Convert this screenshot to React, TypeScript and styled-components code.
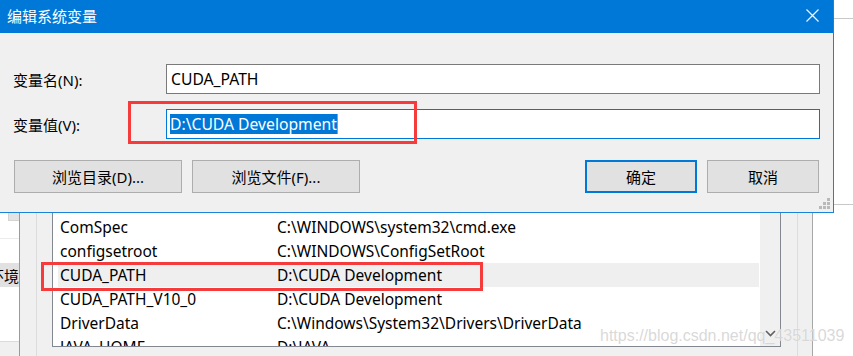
import React from "react";
import styled, { createGlobalStyle } from "styled-components";

const Global = createGlobalStyle`
  html, body { margin: 0; padding: 0; }
  body {
    width: 853px;
    height: 356px;
    overflow: hidden;
    background: #ffffff;
    font-family: "Noto Sans", "Noto Sans CJK SC", sans-serif;
    color: #000;
  }
  * { box-sizing: border-box; }
`;

const Screen = styled.div`
  position: relative;
  width: 853px;
  height: 356px;
  overflow: hidden;
`;

/* ---------- background window ---------- */
const BackWindow = styled.div`
  display: grid;
  grid-template-columns: 20px 32px 729px 32px 40px;
  grid-template-rows: 212px 144px;
  width: 853px;
  height: 356px;
  background: #ffffff;
`;

const TopStrip = styled.div`
  grid-column: 1 / -1;
  display: flex;
  flex-direction: column;
  padding-top: 18px;
  background: #ffffff;
`;

const Rule = styled.div<{ $gap?: number }>`
  height: 1px;
  background: #c8c8c8;
  margin-top: ${(p) => p.$gap ?? 0}px;
`;

const LeftPane = styled.div`
  display: flex;
  flex-direction: column;
  background: #ffffff;
  border-right: 1px solid #9a9a9a;
  overflow: hidden;
`;

const Nub = styled.div`
  align-self: flex-end;
  width: 11px;
  height: 9px;
  background: #e3e3e3;
  border-left: 1px solid #d4d4d4;
  border-bottom: 1px solid #d4d4d4;
`;

const PaneLine = styled.div<{ $top: number }>`
  height: 1px;
  margin-top: ${(p) => p.$top}px;
  background: #ececec;
`;

const PaneButton = styled.div`
  display: flex;
  justify-content: flex-end;
  align-items: center;
  height: 24px;
  margin-top: 24px;
  background: #e1e1e1;
  font-size: 15px;
  white-space: nowrap;
  overflow: hidden;
`;

const PaneFoot = styled.div`
  margin-top: auto;
  height: 15px;
  background: #f0f0f0;
  border-top: 1px solid #dcdcdc;
`;

const Gutter = styled.div`
  display: flex;
  background: #f0f0f0;
  padding-left: 16px;
`;

const GutterBar = styled.div<{ $edge?: boolean }>`
  width: 100%;
  border-left: 1px solid #dcdcdc;
  border-right: ${(p) => (p.$edge ? "1px solid #a6a6a6" : "none")};
`;

const ListCell = styled.div`
  background: #f0f0f0;
`;

const ListBox = styled.div`
  display: flex;
  height: 135px;
  border: 1px solid #828790;
  background: #ffffff;
  overflow: hidden;
`;

const Rows = styled.div`
  flex: 1;
  display: flex;
  flex-direction: column;
  padding: 2px 1px 0 5px;
`;

const Row = styled.div<{ $hi?: boolean }>`
  flex: none;
  display: grid;
  grid-template-columns: 217px 1fr;
  align-items: center;
  height: 24px;
  padding-left: 2px;
  font-size: 15.5px;
  white-space: nowrap;
  background: ${(p) => (p.$hi ? "#efefef" : "transparent")};
`;

const ScrollBar = styled.div`
  width: 20px;
  display: flex;
  flex-direction: column;
  justify-content: flex-end;
  align-items: center;
  padding-bottom: 9px;
  background: #f0f0f0;
`;

const WhiteCell = styled.div`
  background: #ffffff;
`;

/* ---------- dialog ---------- */
const Dialog = styled.section`
  position: absolute;
  left: 0;
  top: 0;
  width: 834px;
  height: 213px;
  display: flex;
  flex-direction: column;
  background: #f0f0f0;
  border-right: 1px solid #1883d7;
  border-bottom: 1px solid #1883d7;
`;

const TitleBar = styled.header`
  height: 33px;
  display: flex;
  align-items: center;
  justify-content: space-between;
  padding: 0 14px 2px 7px;
  background: #0078d7;
  color: #ffffff;
  font-size: 15px;
`;

const Body = styled.div`
  display: flex;
  flex-direction: column;
  padding: 31px 13px 0 13px;
`;

const FieldRow = styled.div<{ $mt?: number }>`
  display: grid;
  grid-template-columns: 153px 1fr;
  align-items: center;
  margin-top: ${(p) => p.$mt ?? 0}px;
  font-size: 15px;
`;

const TextBox = styled.div<{ $focus?: boolean }>`
  height: 30px;
  display: flex;
  align-items: center;
  padding-left: ${(p) => (p.$focus ? 3 : 4)}px;
  background: #ffffff;
  border: 1px solid ${(p) => (p.$focus ? "#0078d7" : "#7a7a7a")};
  font-size: 15.7px;
  white-space: nowrap;
`;

const Selected = styled.span`
  display: inline-flex;
  align-items: center;
  height: 20px;
  background: #0078d7;
  color: #ffffff;
`;

const Caret = styled.span`
  width: 1px;
  height: 20px;
  background: #e8892c;
`;

const ButtonRow = styled.div`
  display: flex;
  gap: 10px;
  margin-top: 21px;
  padding: 0 1px;
`;

const Button = styled.div<{ $w: number; $primary?: boolean; $push?: boolean }>`
  width: ${(p) => p.$w}px;
  height: 33px;
  display: flex;
  align-items: center;
  justify-content: center;
  margin-left: ${(p) => (p.$push ? "auto" : "0")};
  background: #e1e1e1;
  border: ${(p) => (p.$primary ? "2px solid #0078d7" : "1px solid #adadad")};
  font-size: 15px;
`;

const Grip = styled.svg`
  position: absolute;
  right: 3px;
  bottom: 3px;
`;

/* ---------- annotations ---------- */
const RedBox = styled.div<{ $x: number; $y: number; $w: number; $h: number }>`
  position: absolute;
  left: ${(p) => p.$x}px;
  top: ${(p) => p.$y}px;
  width: ${(p) => p.$w}px;
  height: ${(p) => p.$h}px;
  border: 3px solid #f53b3b;
  pointer-events: none;
`;

const Watermark = styled.div`
  position: absolute;
  left: 600px;
  top: 327px;
  font-family: "Liberation Sans", Arial, sans-serif;
  font-size: 16px;
  color: rgba(200, 200, 200, 0.7);
  text-shadow: 0 0 1px rgba(255, 255, 255, 0.9);
  white-space: nowrap;
  pointer-events: none;
`;

const rows: { name: string; value: string; hi?: boolean }[] = [
  { name: "ComSpec", value: "C:\\WINDOWS\\system32\\cmd.exe" },
  { name: "configsetroot", value: "C:\\WINDOWS\\ConfigSetRoot" },
  { name: "CUDA_PATH", value: "D:\\CUDA Development", hi: true },
  { name: "CUDA_PATH_V10_0", value: "D:\\CUDA Development" },
  { name: "DriverData", value: "C:\\Windows\\System32\\Drivers\\DriverData" },
  { name: "JAVA_HOME", value: "D:\\JAVA" },
];

export default function App() {
  return (
    <Screen>
      <Global />
      <BackWindow>
        <TopStrip>
          <Rule />
          <Rule $gap={185} />
        </TopStrip>
        <LeftPane>
          <Nub />
          <PaneLine $top={17} />
          <PaneButton>环境</PaneButton>
          <PaneFoot />
        </LeftPane>
        <Gutter>
          <GutterBar />
        </Gutter>
        <ListCell>
          <ListBox>
            <Rows>
              {rows.map((r) => (
                <Row key={r.name} $hi={r.hi}>
                  <span>{r.name}</span>
                  <span>{r.value}</span>
                </Row>
              ))}
            </Rows>
            <ScrollBar>
              <svg width="11" height="7" viewBox="0 0 11 7">
                <polyline points="1,1 5.5,5.5 10,1" fill="none" stroke="#606060" strokeWidth="1.6" />
              </svg>
            </ScrollBar>
          </ListBox>
        </ListCell>
        <Gutter>
          <GutterBar $edge />
        </Gutter>
        <WhiteCell />
      </BackWindow>

      <Dialog>
        <TitleBar>
          <span>编辑系统变量</span>
          <svg width="13" height="13" viewBox="0 0 13 13">
            <path d="M0.5 0.5 L12.5 12.5 M12.5 0.5 L0.5 12.5" stroke="#ffffff" strokeWidth="1.1" />
          </svg>
        </TitleBar>
        <Body>
          <FieldRow>
            <span>变量名(N):</span>
            <TextBox>CUDA_PATH</TextBox>
          </FieldRow>
          <FieldRow $mt={15}>
            <span>变量值(V):</span>
            <TextBox $focus>
              <Selected>D:\CUDA Development</Selected>
              <Caret />
            </TextBox>
          </FieldRow>
          <ButtonRow>
            <Button $w={168}>浏览目录(D)...</Button>
            <Button $w={168}>浏览文件(F)...</Button>
            <Button $w={112} $primary $push>确定</Button>
            <Button $w={112}>取消</Button>
          </ButtonRow>
        </Body>
        <Grip width="11" height="11" viewBox="0 0 11 11">
          <g fill="#b9b9b9">
            <rect x="8" y="0" width="3" height="3" />
            <rect x="4" y="4" width="3" height="3" />
            <rect x="8" y="4" width="3" height="3" />
            <rect x="0" y="8" width="3" height="3" />
            <rect x="4" y="8" width="3" height="3" />
            <rect x="8" y="8" width="3" height="3" />
          </g>
        </Grip>
      </Dialog>

      <RedBox $x={128} $y={101} $w={289} $h={43} />
      <RedBox $x={41} $y={262} $w={442} $h={29} />
      <Watermark>https://blog.csdn.net/qq_43511039</Watermark>
    </Screen>
  );
}
